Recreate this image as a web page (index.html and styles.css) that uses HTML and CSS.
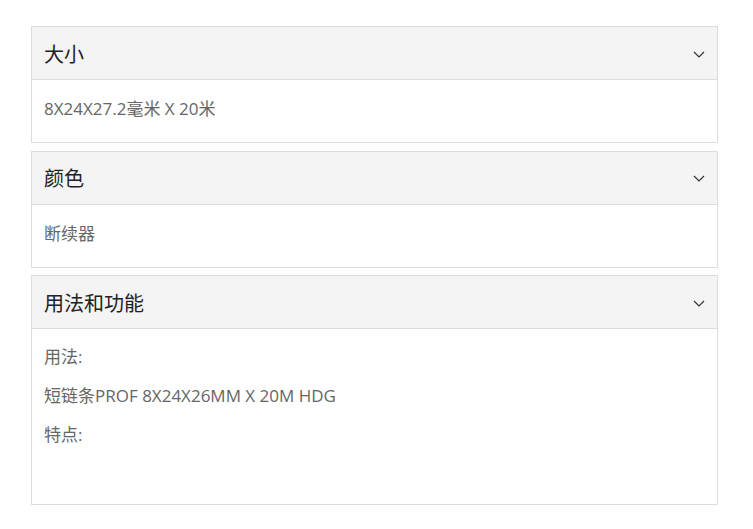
FILE: index.html
```html
<!DOCTYPE html>
<html lang="zh">
<head>
    <meta charset="UTF-8">
    <title>产品规格</title>
    <meta name="viewport" content="width=device-width, initial-scale=1">
    <link rel="stylesheet" href="styles.css">
</head>
<body>

    <div class="specs">
        <div class="spec-card">
            <div class="spec-head">
                <span>大小</span>
                <svg class="chevron" width="12" height="7" viewBox="0 0 12 7"><path d="M1 1 L6 6 L11 1" fill="none" stroke="#333" stroke-width="1.2"/></svg>
            </div>
            <div class="spec-body">
                <p>8X24X27.2毫米 X 20米</p>
            </div>
        </div>

        <div class="spec-card">
            <div class="spec-head">
                <span>颜色</span>
                <svg class="chevron" width="12" height="7" viewBox="0 0 12 7"><path d="M1 1 L6 6 L11 1" fill="none" stroke="#333" stroke-width="1.2"/></svg>
            </div>
            <div class="spec-body">
                <p>断续器</p>
            </div>
        </div>

        <div class="spec-card">
            <div class="spec-head">
                <span>用法和功能</span>
                <svg class="chevron" width="12" height="7" viewBox="0 0 12 7"><path d="M1 1 L6 6 L11 1" fill="none" stroke="#333" stroke-width="1.2"/></svg>
            </div>
            <div class="spec-body long">
                <p>用法:</p>
                <p>短链条PROF 8X24X26MM X 20M HDG</p>
                <p>特点:</p>
            </div>
        </div>
    </div>

</body>
</html>
```

FILE: styles.css
```css
body {
    font-family: "Open Sans", "Noto Sans CJK SC", sans-serif;
    margin: 0;
    background: #fff;
    color: #333;
}

.specs {
    padding: 26px 35px 0 31px;
    display: flex;
    flex-direction: column;
    gap: 7.5px;
}

.spec-card {
    border: 1px solid #dddddd;
}

.spec-head {
    background: #f4f4f4;
    height: 52px;
    border-bottom: 1px solid #dddddd;
    display: flex;
    align-items: center;
    justify-content: space-between;
    padding: 0 12px 0 12px;
    font-size: 20px;
    color: #222;
}

    .spec-head .chevron {
        margin-top: 2px;
    }

.spec-body {
    padding: 17px 12px 21px;
    font-size: 17px;
    color: #666;
}

    .spec-body p {
        margin: 0 0 15px;
        line-height: 24px;
    }

        .spec-body p:last-child {
            margin-bottom: 0;
        }

.spec-body.long {
    padding-top: 16px;
    min-height: 138px;
}
```
